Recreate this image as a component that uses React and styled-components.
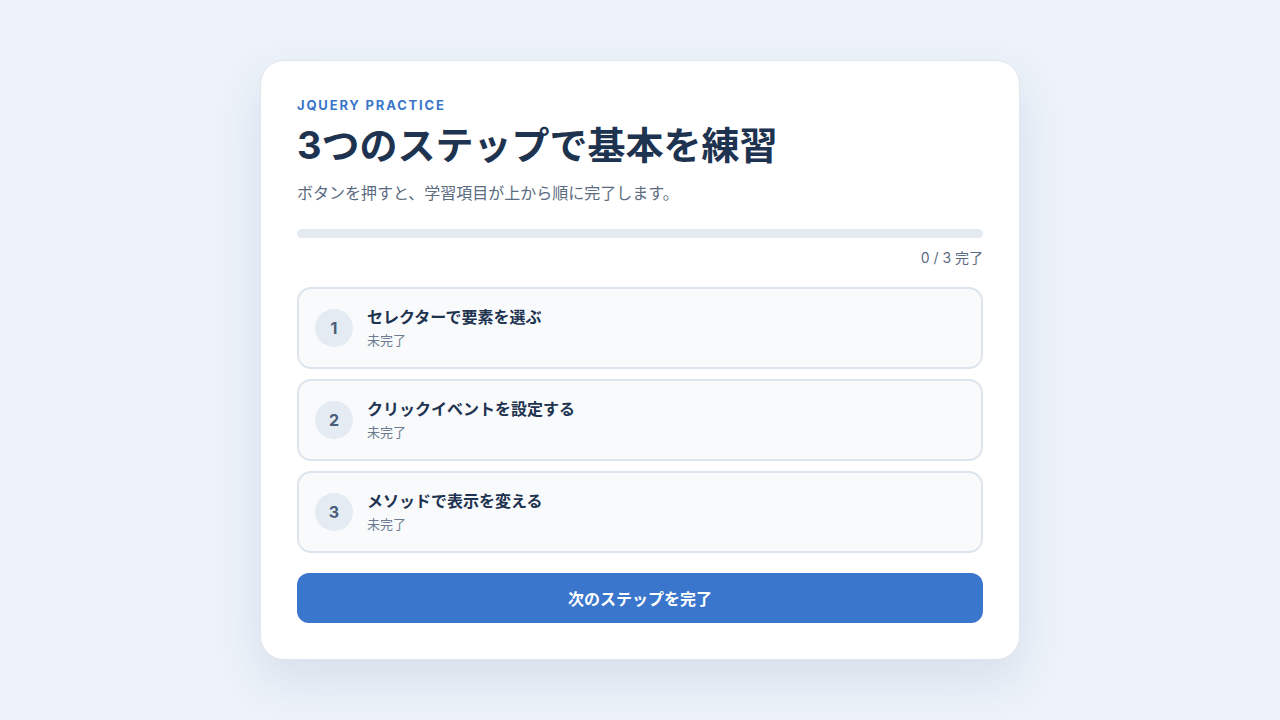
import styled, { createGlobalStyle } from "styled-components";

const GlobalStyle = createGlobalStyle`
  * { box-sizing: border-box; }
  body {
    margin: 0;
    background: #eef3fa;
    font-family: "Inter", "Noto Sans CJK JP", sans-serif;
    color: #1e3350;
  }
`;

const Page = styled.main`
  min-height: 720px;
  display: flex;
  align-items: center;
  justify-content: center;
`;

const Card = styled.section`
  width: 760px;
  background: #fff;
  border: 1px solid #dfe6ef;
  border-radius: 24px;
  padding: 36px;
  box-shadow: 0 20px 50px rgba(40, 70, 120, 0.12);
`;

const Eyebrow = styled.p`
  margin: 0;
  font-size: 13px;
  font-weight: 700;
  letter-spacing: 0.14em;
  color: #3a76c9;
  line-height: 16px;
`;

const Title = styled.h1`
  margin: 8px 0 0;
  font-size: 38px;
  font-weight: 700;
  line-height: 48px;
  color: #1e3350;
`;

const Lead = styled.p`
  margin: 12px 0 0;
  font-size: 16px;
  line-height: 24px;
  color: #5b6b80;
`;

const Track = styled.div`
  margin-top: 24px;
  height: 9px;
  border-radius: 999px;
  background: #e5eaf1;
  overflow: hidden;
`;

const Fill = styled.div`
  height: 100%;
  background: #3a76cc;
`;

const Count = styled.p`
  margin: 10px 0 0;
  text-align: right;
  font-size: 14px;
  line-height: 20px;
  color: #5b6b80;
`;

const List = styled.ol`
  list-style: none;
  margin: 19px 0 0;
  padding: 0;
  display: flex;
  flex-direction: column;
  gap: 10px;
`;

const Item = styled.li`
  display: flex;
  align-items: center;
  gap: 14px;
  height: 82px;
  padding: 0 16px;
  border: 2px solid #dde5ee;
  border-radius: 14px;
  background: #f8fafc;
`;

const Badge = styled.span`
  width: 38px;
  height: 38px;
  flex: none;
  border-radius: 50%;
  background: #e5ebf3;
  color: #4a5d78;
  font-size: 16px;
  font-weight: 700;
  display: flex;
  align-items: center;
  justify-content: center;
`;

const ItemText = styled.div`
  display: flex;
  flex-direction: column;
  gap: 3px;
  margin-top: -1px;
`;

const ItemTitle = styled.span`
  font-size: 16px;
  font-weight: 700;
  line-height: 21px;
  color: #1e3350;
`;

const ItemState = styled.span`
  font-size: 13px;
  line-height: 18px;
  color: #6b7a8e;
`;

const Button = styled.button`
  margin-top: 20px;
  width: 100%;
  height: 50px;
  border: none;
  border-radius: 12px;
  background: #3a76cc;
  color: #fff;
  font-family: inherit;
  font-size: 16px;
  font-weight: 700;
  cursor: pointer;
`;

const steps = [
  "セレクターで要素を選ぶ",
  "クリックイベントを設定する",
  "メソッドで表示を変える",
];

export default function App() {
  const done = 0;
  return (
    <>
      <GlobalStyle />
      <Page>
        <Card>
          <Eyebrow>JQUERY PRACTICE</Eyebrow>
          <Title>3つのステップで基本を練習</Title>
          <Lead>ボタンを押すと、学習項目が上から順に完了します。</Lead>
          <Track>
            <Fill style={{ width: `${(done / steps.length) * 100}%` }} />
          </Track>
          <Count>
            {done} / {steps.length} 完了
          </Count>
          <List>
            {steps.map((s, i) => (
              <Item key={s}>
                <Badge>{i + 1}</Badge>
                <ItemText>
                  <ItemTitle>{s}</ItemTitle>
                  <ItemState>未完了</ItemState>
                </ItemText>
              </Item>
            ))}
          </List>
          <Button>次のステップを完了</Button>
        </Card>
      </Page>
    </>
  );
}
